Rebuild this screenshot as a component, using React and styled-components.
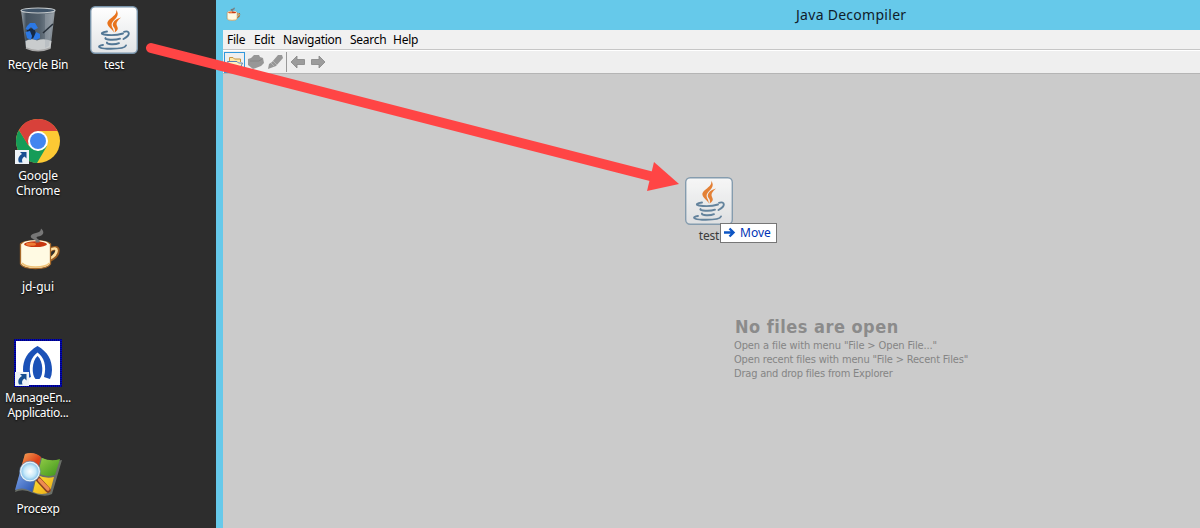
import React from "react";
import styled, { createGlobalStyle } from "styled-components";

const Global = createGlobalStyle`
  * { box-sizing: border-box; }
  body { margin: 0; overflow: hidden; background: #2d2d2d; }
`;

const ui = `"Noto Sans", "Open Sans", sans-serif`;
const tahoma = `"DejaVu Sans Condensed", "DejaVu Sans", sans-serif`;

const Screen = styled.div`
  position: relative;
  display: flex;
  width: 1200px;
  height: 528px;
  overflow: hidden;
  background: #2d2d2d;
  font-family: ${ui};
`;

const Desktop = styled.div`
  display: flex;
  flex: 0 0 216px;
`;

const Column = styled.div`
  display: flex;
  flex-direction: column;
  width: 76px;
`;

const Shortcut = styled.div`
  display: flex;
  flex: none;
  flex-direction: column;
  align-items: center;
  height: 111px;
  padding-top: 6px;
  svg { display: block; flex: none; }
`;

const ShortcutLabel = styled.div`
  margin-top: 3px;
  font-size: 12px;
  line-height: 15px;
  letter-spacing: ${(p) => p.$track || 0}px;
  text-align: center;
  white-space: pre;
  color: #fff;
  text-shadow: 0 1px 2px #000;
`;

const Window = styled.div`
  display: flex;
  flex-direction: column;
  flex: 1;
  padding-left: 7px;
  background: #66c9ea;
`;

const TitleBar = styled.div`
  display: flex;
  align-items: center;
  height: 30px;
`;

const TitleIcon = styled.span`
  display: flex;
  margin-left: 2px;
`;

const Title = styled.div`
  margin-left: 555px;
  font-size: 14px;
  line-height: 30px;
  letter-spacing: 0.28px;
  color: #10202a;
`;

const MenuBar = styled.div`
  display: flex;
  align-items: center;
  gap: 8px;
  height: 20px;
  padding-left: 4px;
  background: #f1f1f1;
  border-bottom: 1px solid #c6c6c6;
`;

const MenuItem = styled.span`
  font-size: 12px;
  letter-spacing: ${(p) => p.$track || 0}px;
  width: ${(p) => p.$w}px;
  white-space: nowrap;
  color: #000;
`;

const Toolbar = styled.div`
  display: flex;
  align-items: center;
  height: 24px;
  padding-left: 1px;
  background: #efefef;
  border-top: 1px solid #fff;
  border-bottom: 1px solid #b5b5b5;
`;

const ToolButton = styled.span`
  display: flex;
  align-items: center;
  justify-content: center;
  width: ${(p) => p.$w || 20}px;
  height: 21px;
  border: 1px solid ${(p) => (p.$active ? "#3298dc" : "transparent")};
`;

const Divider = styled.span`
  width: 1px;
  height: 20px;
  margin: 0 1px;
  background: #999;
`;

const Content = styled.div`
  flex: 1;
  padding: 242px 0 0 512px;
  background: #cbcbcb;
`;

const EmptyTitle = styled.div`
  font: bold 18px/22px ${tahoma};
  letter-spacing: 0.48px;
  margin-bottom: 1px;
  color: #8b8b8b;
  white-space: nowrap;
`;

const EmptyLine = styled.div`
  font: 11px/14px ${tahoma};
  letter-spacing: ${(p) => p.$track || 0}px;
  margin-left: -1px;
  color: #858585;
  white-space: nowrap;
`;

const ArrowOverlay = styled.svg`
  position: absolute;
  left: 0;
  top: 0;
  pointer-events: none;
`;

const DragGhost = styled.div`
  position: absolute;
  left: 685px;
  top: 177px;
  opacity: 0.85;
  svg { display: block; }
`;

const GhostLabel = styled.div`
  margin-top: 3px;
  font-size: 12px;
  line-height: 15px;
  letter-spacing: -0.2px;
  text-align: center;
  color: #222;
`;

const DropTip = styled.div`
  position: absolute;
  left: 720px;
  top: 223px;
  display: flex;
  align-items: center;
  gap: 4px;
  width: 57px;
  height: 20px;
  padding: 0 0 1px 2px;
  background: #fff;
  border: 1px solid #767676;
  font-size: 12px;
  line-height: 16px;
  color: #0033b5;
`;

function RecycleBin() {
  return (
    <svg width="48" height="48" viewBox="0 0 48 48">
      <defs>
        <linearGradient id="glass" x1="0" x2="1">
          <stop offset="0" stopColor="#9ba5ad" />
          <stop offset=".15" stopColor="#44525f" />
          <stop offset=".55" stopColor="#53606c" />
          <stop offset=".8" stopColor="#74808a" />
          <stop offset="1" stopColor="#9aa1a7" />
        </linearGradient>
      </defs>
      <path d="M7 4 41 4 36.500 42Q24 48 12 42Z" fill="url(#glass)" />
      <path d="M11.500 35Q17 32 23 34.500Q30 32 37.500 35L36.500 42Q24 48 12 42Z" fill="#c9cccd" />
      <path d="M31 8 39 8 35 40 31 42Z" fill="#a6adb3" opacity=".4" />
      <path d="M29 27 39 18" stroke="#27303a" strokeWidth="1.600" />
      <ellipse cx="24" cy="4.500" rx="17" ry="2.500" fill="#405468" stroke="#c4c9cc" strokeWidth="1.200" />
      <path d="M13 23 20 22 23 30 17 33 13 31Z" fill="#152944" />
      <path d="M13 20 16 17 21 17 24 22 20 24 17 21 14 24 11.500 23ZM11.500 26 16 25 18 30 17 34 13 32ZM19 33 22 26 26 28 26 32 22 34Z" fill="#2b78e4" />
      <path d="M12 42Q24 47.500 36.500 42" fill="none" stroke="#a7a7a7" strokeWidth="1.500" />
    </svg>
  );
}

function JavaFile({ id }) {
  return (
    <svg width="48" height="48" viewBox="0 0 48 48">
      <defs>
        <linearGradient id={id} x1="0" y1="0" x2="0" y2="1">
          <stop offset="0" stopColor="#fff" />
          <stop offset="1" stopColor="#e2e4e6" />
        </linearGradient>
      </defs>
      <rect x=".7" y=".7" width="46.600" height="46.600" rx="4.500" fill={`url(#${id})`} stroke="#7994aa" strokeWidth="1.400" />
      <path d="M26 3.500C28.500 10 16.500 12.500 17.500 18C18 21 22 23 24 26.500C23.500 22 20.500 20 22 17C24 13 31 10 26 3.500Z" fill="#e8731c" />
      <path d="M31 11.500C25 13 22 16.500 23 20C24 22 26 23 24.500 26.500C30.500 23 26.500 21 26.500 18C26.500 16 28 14 31 11.500Z" fill="#e8731c" />
      <g fill="none" stroke="#527795" strokeWidth="1.900" strokeLinecap="round">
        <path d="M17 25.500C12 26 10 28 14 28.500C20 29.400 28 29 33 27.500" />
        <path d="M34 25.800C40 24 41 29 33.500 33" />
        <path d="M15.500 32C14 34 25 34.500 30 32.700" />
        <path d="M17 36.500C16 38.500 25 39 29 37.200" />
        <path d="M13 39C6 40 9 42.500 17 42.700C27 43 35 42 36 39.500" />
      </g>
    </svg>
  );
}

function LinkBadge() {
  return (
    <g>
      <rect x="1" y="33" width="14" height="14" fill="#eef3f7" />
      <path d="M6 35H12.500V41.500L10.500 39.500C8 41 7.500 43 8.500 45.500H5C3.500 42 4.500 39 8 37Z" fill="#174f91" />
    </g>
  );
}

function Chrome() {
  return (
    <svg width="48" height="48" viewBox="0 0 48 48">
      <circle cx="24" cy="24" r="22" fill="#fcc934" />
      <path d="M4.950 13A22 22 0 0 0 23 46L33 29 24 34 15 29Z" fill="#169c58" />
      <path d="M4.950 13A22 22 0 0 1 43.500 14H24L14 28Z" fill="#d8413a" />
      <circle cx="24" cy="24" r="10" fill="#fff" />
      <circle cx="24" cy="24" r="8" fill="#4285f0" />
      <LinkBadge />
    </svg>
  );
}

function Coffee({ size = 48 }) {
  return (
    <svg width={size} height={size} viewBox="0 0 48 48">
      <path d="M36 22C46 16 46 27 35 32" fill="none" stroke="#9a5c22" strokeWidth="4.600" />
      <path d="M36 22C45 17 45 26 35 31" fill="none" stroke="#ffe2a4" strokeWidth="2.600" />
      <path d="M6.500 16C11 11.500 32 11.500 36.500 16V36Q34 40.500 21.500 40.500Q9 40.500 6.500 36Z" fill="#fffae3" stroke="#a76a2b" strokeWidth="1.300" />
      <path d="M8 35Q11 39 21.500 39Q32 39 35.500 35" stroke="#f0c276" strokeWidth="1.500" fill="none" />
      <ellipse cx="21.500" cy="16" rx="13" ry="3.800" fill="#fff9e0" />
      <ellipse cx="21.500" cy="16.200" rx="11.500" ry="2.900" fill="#c93710" />
      <ellipse cx="17" cy="16.200" rx="5" ry="1.600" fill="#ed7d35" />
      <path d="M21 14.500C25 12 15 11 17 7.500C19 4 27 6 27 .5C32 5 28 8 24 8.500C19 10 29 12 25 14.500Z" fill="#777" />
    </svg>
  );
}

function ManageEngine() {
  return (
    <svg width="48" height="48" viewBox="0 0 48 48">
      <rect x="1" y="1" width="46" height="46" fill="#fff" stroke="#00007c" strokeWidth="2" />
      <rect x="1" y="1" width="46" height="46" fill="none" stroke="#0010e8" strokeWidth="1" strokeDasharray="1 1" />
      <path d="M23.500 7C13 13 9 21 9 31Q9 36 11 40L17 38C14 27 17 18 23.500 13.500C30 18 33 27 30 38L36 40Q38 36 38 31C38 21 34 13 23.500 7Z" fill="#1b51b7" />
      <path d="M23.500 17C17.500 22 17.500 36 21.500 40H25.500C29.500 36 29.500 22 23.500 17Z" fill="#1b51b7" />
      <LinkBadge />
    </svg>
  );
}

function Procexp() {
  return (
    <svg width="48" height="48" viewBox="0 0 48 48">
      <defs>
        <linearGradient id="pr" x2="1" y2="1"><stop stopColor="#f8aa59" /><stop offset=".6" stopColor="#dd421a" /></linearGradient>
        <linearGradient id="pg" x2="1" y2="1"><stop stopColor="#94cd47" /><stop offset="1" stopColor="#3d941b" /></linearGradient>
        <linearGradient id="pb" x2="1" y2="1"><stop stopColor="#83aaed" /><stop offset="1" stopColor="#244fab" /></linearGradient>
        <linearGradient id="py" x2="1" y2="1"><stop stopColor="#ffe23a" /><stop offset="1" stopColor="#ecaa13" /></linearGradient>
        <radialGradient id="lens"><stop stopColor="#fff" /><stop offset=".6" stopColor="#c6e9fa" /><stop offset="1" stopColor="#7bbce7" /></radialGradient>
      </defs>
      <path d="M11 4Q20 1 28 8Q37 13 48 10L38 44Q31 48 19 43Q9 38 1 42Z" fill="#6a6f68" />
      <path d="M11 4Q20 1 27 7L23 23Q15 18 6 21Z" fill="url(#pr)" />
      <path d="M28 8Q37 12 46 9L41 25Q32 28 24 23Z" fill="url(#pg)" />
      <path d="M6 22Q15 19 22 24L18 42Q9 36 1 40Z" fill="url(#pb)" />
      <path d="M23 25Q32 29 40 27L36 42Q28 46 19 42Z" fill="url(#py)" />
      <path d="M24 29 34 40" stroke="#874023" strokeWidth="5.500" strokeLinecap="round" />
      <path d="M25.500 30 34 39" stroke="#ee8b51" strokeWidth="3.300" strokeLinecap="round" />
      <circle cx="16" cy="21.500" r="9.500" fill="url(#lens)" stroke="#e8f2f8" strokeWidth="1.600" />
      <circle cx="16" cy="21.500" r="10.400" fill="none" stroke="#5b7fae" strokeWidth=".6" />
    </svg>
  );
}

function OpenFolder() {
  return (
    <svg width="18" height="16" viewBox="0 0 18 16">
      <path d="M3.500 8V3.500H7L8.500 5H14.500V8" fill="#ffe9a5" stroke="#c69345" />
      <path d="M1.500 7.500H11L12.500 9H16.500L14.500 13.500H3.500Z" fill="#fff2be" stroke="#5b83b5" />
    </svg>
  );
}

function OpenType() {
  return (
    <svg width="18" height="16" viewBox="0 0 18 16">
      <path d="M1 5 4 4 7 1H12L13 3 16 4 17 9 14 12 6 15 1 11Z" fill="#979797" />
      <path d="M3 7H12L15 5" fill="none" stroke="#858585" />
    </svg>
  );
}

function Marker() {
  return (
    <svg width="17" height="16" viewBox="0 0 17 16">
      <path d="M11 1 15 1 16 4 9 12 1 15 2 10 5 8Z" fill="#979797" />
      <path d="M6 7 10 11M4 9 7 12" stroke="#b5b5b5" />
    </svg>
  );
}

function NavArrow({ flip }) {
  return (
    <svg width="16" height="14" viewBox="0 0 16 14">
      <path transform={flip ? "translate(16 0) scale(-1 1)" : undefined} d="M1 7 7 1V4.500H14.500V9.500H7V13Z" fill="#9c9c9c" stroke="#858585" strokeWidth=".8" />
    </svg>
  );
}

const columns = [
  [
    { icon: <RecycleBin />, label: "Recycle Bin", track: -0.25 },
    { icon: <Chrome />, label: "Google\nChrome", track: -0.15 },
    { icon: <Coffee />, label: "jd-gui" },
    { icon: <ManageEngine />, label: "ManageEn...\nApplicatio...", track: -0.35 },
    { icon: <Procexp />, label: "Procexp", track: -0.3 },
  ],
  [{ icon: <JavaFile id="paper" />, label: "test", track: -0.3 }],
];

const menus = [
  ["File", 19],
  ["Edit", 21],
  ["Navigation", 59],
  ["Search", 35],
  ["Help", 26],
];

const hints = [
  ['Open a file with menu "File > Open File..."', -0.12],
  ['Open recent files with menu "File > Recent Files"', -0.17],
  ["Drag and drop files from Explorer", -0.2],
];

export default function App() {
  return (
    <Screen>
      <Global />
      <Desktop>
        {columns.map((items, i) => (
          <Column key={i}>
            {items.map((it) => (
              <Shortcut key={it.label}>
                {it.icon}
                <ShortcutLabel $track={it.track}>{it.label}</ShortcutLabel>
              </Shortcut>
            ))}
          </Column>
        ))}
      </Desktop>
      <Window>
        <TitleBar>
          <TitleIcon><Coffee size={16} /></TitleIcon>
          <Title>Java Decompiler</Title>
        </TitleBar>
        <MenuBar>
          {menus.map(([name, w]) => (
            <MenuItem key={name} $w={w} $track={-0.25}>{name}</MenuItem>
          ))}
        </MenuBar>
        <Toolbar>
          <ToolButton $w={21} $active><OpenFolder /></ToolButton>
          <ToolButton $w={21}><OpenType /></ToolButton>
          <ToolButton $w={19}><Marker /></ToolButton>
          <Divider />
          <ToolButton><NavArrow /></ToolButton>
          <ToolButton><NavArrow flip /></ToolButton>
        </Toolbar>
        <Content>
          <EmptyTitle>No files are open</EmptyTitle>
          {hints.map(([text, track]) => (
            <EmptyLine key={text} $track={track}>{text}</EmptyLine>
          ))}
        </Content>
      </Window>
      <DragGhost>
        <JavaFile id="ghostPaper" />
        <GhostLabel>test</GhostLabel>
      </DragGhost>
      <DropTip>
        <svg width="13" height="13" viewBox="0 0 13 13">
          <path d="M1 6.500H10M6.500 2.500 10.500 6.500 6.500 10.500" fill="none" stroke="#0d55c4" strokeWidth="2.400" />
        </svg>
        Move
      </DropTip>
      <ArrowOverlay width="1200" height="528" viewBox="0 0 1200 528">
        <path d="M151 48 654 177" stroke="#ff4545" strokeWidth="10" strokeLinecap="round" />
        <path d="M654 162 679 184 647 191Z" fill="#ff4545" />
      </ArrowOverlay>
    </Screen>
  );
}
